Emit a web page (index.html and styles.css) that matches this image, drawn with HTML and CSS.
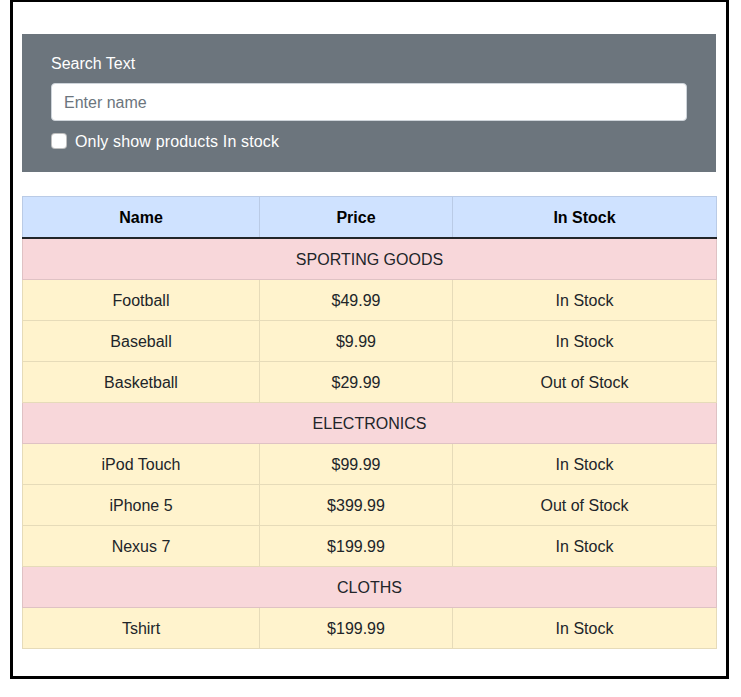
FILE: index.html
```html
<!DOCTYPE html>
<html lang="en">
<head>
<meta charset="utf-8">
<title>Products</title>
<link rel="stylesheet" href="styles.css">
</head>
<body>
<div class="frame">
  <form class="search-panel">
    <label class="search-label" for="search">Search Text</label>
    <input class="search-input" id="search" type="text" placeholder="Enter name">
    <div class="check-row">
      <input class="check-box" id="instock" type="checkbox">
      <label class="check-label" for="instock">Only show products In stock</label>
    </div>
  </form>
  <table class="products">
    <thead>
      <tr class="head-row">
        <th class="col-name">Name</th>
        <th class="col-price">Price</th>
        <th class="col-stock">In Stock</th>
      </tr>
    </thead>
    <tbody>
      <tr class="cat-row"><td colspan="3">SPORTING GOODS</td></tr>
      <tr class="item-row"><td>Football</td><td>$49.99</td><td>In Stock</td></tr>
      <tr class="item-row"><td>Baseball</td><td>$9.99</td><td>In Stock</td></tr>
      <tr class="item-row"><td>Basketball</td><td>$29.99</td><td>Out of Stock</td></tr>
      <tr class="cat-row"><td colspan="3">ELECTRONICS</td></tr>
      <tr class="item-row"><td>iPod Touch</td><td>$99.99</td><td>In Stock</td></tr>
      <tr class="item-row"><td>iPhone 5</td><td>$399.99</td><td>Out of Stock</td></tr>
      <tr class="item-row"><td>Nexus 7</td><td>$199.99</td><td>In Stock</td></tr>
      <tr class="cat-row"><td colspan="3">CLOTHS</td></tr>
      <tr class="item-row"><td>Tshirt</td><td>$199.99</td><td>In Stock</td></tr>
    </tbody>
  </table>
</div>
</body>
</html>
```
FILE: styles.css
```css
* { box-sizing: border-box; }

html, body {
  margin: 0;
  padding: 0;
  background: #fff;
}

body {
  font-family: "Liberation Sans", Arial, sans-serif;
  font-size: 16px;
  line-height: 24px;
  color: #212529;
}

.frame {
  width: 719px;
  margin-left: 10px;
  border: 3px solid #000;
  border-top-width: 2px;
  padding: 32px 10px 27px 9px;
}

.search-panel {
  background: #6c757d;
  padding: 18px 29px 19px 29px;
  margin: 0 0 24px 0;
  display: flex;
  flex-direction: column;
}

.search-label {
  color: #fff;
  margin-bottom: 7px;
  line-height: 24px;
}

.search-input {
  display: block;
  width: 100%;
  height: 38px;
  padding: 7px 12px 5px 12px;
  font-family: inherit;
  font-size: 16px;
  line-height: 24px;
  color: #212529;
  background: #fff;
  border: 1px solid #ced4da;
  border-radius: 4px;
  outline: none;
}

.search-input::placeholder {
  color: #6c757d;
  opacity: 1;
}

.check-row {
  display: flex;
  align-items: center;
  margin-top: 8px;
  height: 24px;
}

.check-box {
  appearance: none;
  -webkit-appearance: none;
  width: 16px;
  height: 16px;
  margin: 0 8px 0 0;
  background: #fff;
  border: 1px solid rgba(0, 0, 0, 0.25);
  border-radius: 4px;
}

.check-label {
  color: #fff;
  padding-top: 2px;
  letter-spacing: 0.15px;
}

.products {
  width: 694px;
  table-layout: fixed;
  border-collapse: collapse;
  margin: 0;
}

.products th,
.products td {
  padding: 9px 8px 7px 8px;
  text-align: center;
  line-height: 24px;
}

.col-name { width: 237px; }
.col-price { width: 193px; }
.col-stock { width: 264px; }

.head-row th {
  background: #cfe2ff;
  border: 1px solid #bacbe6;
  color: #000;
  font-weight: bold;
}

.cat-row td {
  background: #f8d7da;
  border: 1px solid #dfc2c4;
  color: #212529;
}

.products tbody tr:first-child td {
  border-top: 2px solid #212529;
}

.item-row td {
  background: #fff3cd;
  border: 1px solid #e6dbb9;
  color: #212529;
}
```
